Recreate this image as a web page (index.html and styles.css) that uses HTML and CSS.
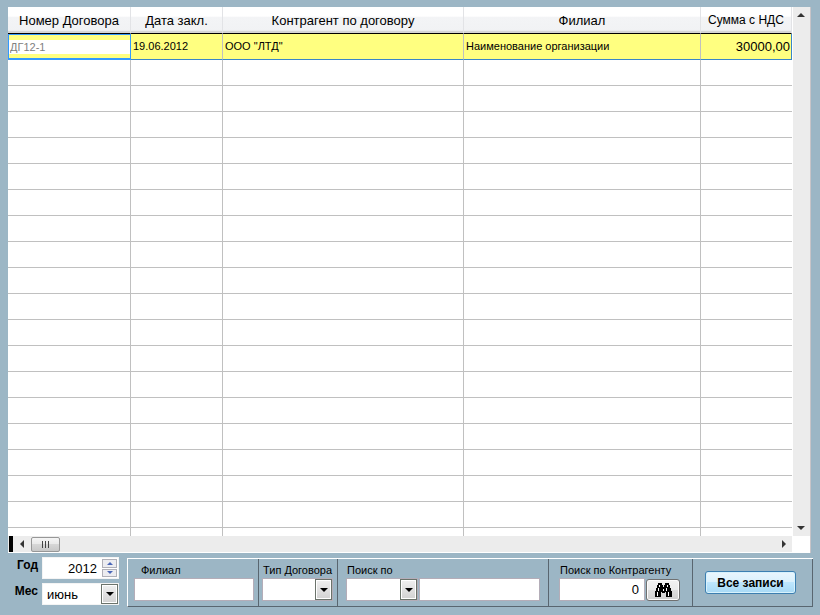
FILE: index.html
```html
<!DOCTYPE html>
<html lang="ru">

<head>
    <meta charset="UTF-8" />
    <title>Договора</title>
    <link rel="stylesheet" href="styles.css">
</head>

<body>
    <main class="grid">
        <div class="grid-view">
            <table>
                <colgroup>
                    <col class="col-number">
                    <col class="col-date">
                    <col class="col-partner">
                    <col class="col-branch">
                    <col class="col-sum">
                </colgroup>
                <thead>
                    <tr>
                        <th>Номер Договора</th>
                        <th>Дата закл.</th>
                        <th>Контрагент по договору</th>
                        <th>Филиал</th>
                        <th class="sum-head">Сумма с НДС</th>
                    </tr>
                </thead>
                <tbody>
                    <tr class="selected">
                        <td class="active"><input type="text" class="cell-input" value="ДГ12-1" aria-label="Номер Договора"></td>
                        <td>19.06.2012</td>
                        <td>ООО "ЛТД"</td>
                        <td>Наименование организации</td>
                        <td class="sum">30000,00</td>
                    </tr>
                    <tr><td></td><td></td><td></td><td></td><td></td></tr>
                    <tr><td></td><td></td><td></td><td></td><td></td></tr>
                    <tr><td></td><td></td><td></td><td></td><td></td></tr>
                    <tr><td></td><td></td><td></td><td></td><td></td></tr>
                    <tr><td></td><td></td><td></td><td></td><td></td></tr>
                    <tr><td></td><td></td><td></td><td></td><td></td></tr>
                    <tr><td></td><td></td><td></td><td></td><td></td></tr>
                    <tr><td></td><td></td><td></td><td></td><td></td></tr>
                    <tr><td></td><td></td><td></td><td></td><td></td></tr>
                    <tr><td></td><td></td><td></td><td></td><td></td></tr>
                    <tr><td></td><td></td><td></td><td></td><td></td></tr>
                    <tr><td></td><td></td><td></td><td></td><td></td></tr>
                    <tr><td></td><td></td><td></td><td></td><td></td></tr>
                    <tr><td></td><td></td><td></td><td></td><td></td></tr>
                    <tr><td></td><td></td><td></td><td></td><td></td></tr>
                    <tr><td></td><td></td><td></td><td></td><td></td></tr>
                    <tr><td></td><td></td><td></td><td></td><td></td></tr>
                    <tr><td></td><td></td><td></td><td></td><td></td></tr>
                    <tr><td></td><td></td><td></td><td></td><td></td></tr>
                </tbody>
            </table>
        </div>
        <div class="scroll-v">
            <button type="button" class="scroll-btn" aria-label="Вверх">
                <svg width="8" height="4" viewBox="0 0 8 4"><path d="M0 4L4 0L8 4Z" fill="#333" /></svg>
            </button>
            <button type="button" class="scroll-btn" aria-label="Вниз">
                <svg width="8" height="4" viewBox="0 0 8 4"><path d="M0 0L4 4L8 0Z" fill="#333" /></svg>
            </button>
        </div>
        <div class="scroll-h">
            <span class="split"></span>
            <button type="button" class="scroll-btn" aria-label="Влево">
                <svg width="4" height="8" viewBox="0 0 4 8"><path d="M4 0L0 4L4 8Z" fill="#333" /></svg>
            </button>
            <span class="thumb">
                <svg width="9" height="7" viewBox="0 0 9 7"><path d="M1 0H2V7H1ZM4 0H5V7H4ZM7 0H8V7H7Z" fill="#444" /></svg>
            </span>
            <button type="button" class="scroll-btn scroll-right" aria-label="Вправо">
                <svg width="4" height="8" viewBox="0 0 4 8"><path d="M0 0L4 4L0 8Z" fill="#333" /></svg>
            </button>
        </div>
        <div class="corner"></div>
    </main>

    <form class="footer">
        <div class="period">
            <label for="year">Год</label>
            <div class="field">
                <input type="text" id="year" class="year" value="2012">
                <div class="spin">
                    <button type="button" aria-label="Больше">
                        <svg width="6" height="3" viewBox="0 0 6 3"><path d="M0 3L3 0L6 3Z" fill="#4a66b8" /></svg>
                    </button>
                    <button type="button" aria-label="Меньше">
                        <svg width="6" height="3" viewBox="0 0 6 3"><path d="M0 0L3 3L6 0Z" fill="#4a66b8" /></svg>
                    </button>
                </div>
            </div>
            <label for="month">Мес</label>
            <div class="field">
                <select id="month" class="month">
                    <option>июнь</option>
                </select>
                <span class="arrow"></span>
            </div>
        </div>

        <div class="filters">
            <div class="group group-branch">
                <label for="branch">Филиал</label>
                <input type="text" id="branch">
            </div>
            <div class="group group-type">
                <label for="type">Тип Договора</label>
                <div class="field">
                    <select id="type"><option></option></select>
                    <span class="arrow"></span>
                </div>
            </div>
            <div class="group group-search">
                <label for="search-by">Поиск по</label>
                <div class="row">
                    <div class="field">
                        <select id="search-by"><option></option></select>
                        <span class="arrow"></span>
                    </div>
                    <input type="text" aria-label="Текст поиска">
                </div>
            </div>
            <div class="group group-partner">
                <label for="partner">Поиск по Контрагенту</label>
                <div class="row">
                    <input type="text" id="partner" class="number" value="0">
                    <button type="button" class="find" aria-label="Найти">
                        <svg width="17" height="14" viewBox="0 0 17 14">
                            <path d="M3 0H7V2H8V4H9V2H10V0H14V2H15V5H16V8H17V14H11V9H10V10H7V9H6V14H0V8H1V5H2V2H3Z" fill="#000" />
                            <path d="M4 2H5V4H4ZM12 2H13V4H12ZM3 5H4V8H3ZM11 5H12V8H11ZM2 9H3V13H2ZM13 9H14V13H13ZM8 6H9V8H8Z" fill="#fff" />
                        </svg>
                    </button>
                </div>
            </div>
            <div class="group group-all">
                <button type="button" class="show-all">Все записи</button>
            </div>
        </div>
    </form>
</body>

</html>
```
FILE: styles.css
```css
* {
    box-sizing: border-box;
}

body {
    margin: 0;
    height: 100vh;
    padding: 7px 8px 8px;
    display: flex;
    flex-direction: column;
    background: #9cb6c5;
    color: #000;
    font-family: "Liberation Sans", Arial, sans-serif;
    font-size: 11px;
}

input,
select,
button {
    margin: 0;
    font-family: inherit;
    font-size: 13px;
    color: #000;
}

svg {
    display: block;
}

/* Table with its scrollbars */
.grid {
    flex: 1;
    min-height: 0;
    margin-right: 1px;
    display: grid;
    grid-template-columns: 1fr 18px;
    grid-template-rows: 1fr 17px;
    background: #fff;
    border-right: 1px solid #c8c4c8;
}

.grid-view {
    min-height: 0;
    overflow: hidden;
}

table {
    width: 100%;
    table-layout: fixed;
    border-collapse: separate;
    border-spacing: 0;
}

.col-number {
    width: 123px;
}

.col-date {
    width: 92px;
}

.col-branch {
    width: 237px;
}

.col-sum {
    width: 91px;
}

th {
    height: 27px;
    padding: 0;
    border-right: 1px solid #e2e3e6;
    border-bottom: 1px solid #000;
    background: linear-gradient(#fff 0, #fff 35%, #f3f4f6 40%, #f1f2f4 90%, #d5d5d5 92%);
    font-size: 13px;
    font-weight: normal;
    white-space: nowrap;
}

.sum-head {
    font-size: 12px;
}

td {
    height: 26px;
    padding: 0 2px 2px;
    border-right: 1px solid #c0c0c0;
    border-bottom: 1px solid #c0c0c0;
    white-space: nowrap;
}

td:last-child {
    border-right: none;
}

.selected td {
    background: #ffff80;
    border-bottom-color: #3a86c8;
}

.selected .active {
    padding: 0;
    border: 1px solid #3399ff;
    border-width: 1px 1px 2px;
}

.cell-input {
    display: block;
    width: 100%;
    height: 14px;
    padding: 0 1px;
    border: none;
    background: #fff;
    font-size: 11px;
    color: #808080;
}

.selected .sum {
    padding: 0 1px 0 2px;
    border-right: 1px solid #3a86c8;
    font-size: 13px;
    text-align: right;
}

.scroll-v,
.scroll-h {
    display: flex;
    justify-content: space-between;
    background: #ececec;
}

.scroll-v {
    flex-direction: column;
    border-left: 1px solid #fff;
}

.scroll-h {
    align-items: center;
    justify-content: flex-start;
    border-bottom: 1px solid #fff;
    padding-left: 1px;
}

.scroll-btn {
    display: flex;
    width: 16px;
    height: 16px;
    padding: 0;
    border: none;
    background: none;
    align-items: center;
    justify-content: center;
}

.split {
    width: 4px;
    height: 16px;
    margin-right: 1px;
    background: #000;
}

.thumb {
    display: flex;
    width: 29px;
    height: 15px;
    margin-left: 1px;
    align-items: center;
    justify-content: center;
    border: 1px solid #979797;
    border-radius: 2px;
    background: linear-gradient(#f5f5f5 0, #e9e9e9 45%, #d6d6d6 50%, #c8c8c8 100%);
}

.scroll-right {
    margin-left: auto;
}

/* Bottom panel */
.footer {
    display: flex;
    min-height: 54px;
    padding-top: 4px;
    gap: 8px;
}

.period {
    display: grid;
    grid-template-columns: 30px 77px;
    grid-template-rows: 22px 22px;
    column-gap: 4px;
    row-gap: 4px;
    font-size: 12px;
    font-weight: bold;
}

.period label {
    padding-top: 1px;
    text-align: right;
}

.field {
    position: relative;
    display: flex;
}

input[type="text"],
select {
    min-width: 0;
    border-radius: 0;
    outline: none;
}

.field,
.group input {
    background: #fff;
    border: 1px solid #b4adb8;
}

.period .field {
    border-color: #f4f4f4;
}

select {
    appearance: none;
    width: 100%;
    padding: 0 18px 0 4px;
    border: none;
    background: #fff;
}

.year {
    flex: 1;
    padding: 0 4px 0 0;
    border: none;
    text-align: right;
}

.spin {
    display: flex;
    flex-direction: column;
    width: 15px;
    margin: 1px;
    gap: 1px;
}

.spin button {
    display: flex;
    flex: 1;
    padding: 0;
    align-items: center;
    justify-content: center;
    border: 1px solid #b0b0b8;
    background: #ececf0;
}

/* Drop-down button drawn over the select */
.arrow {
    position: absolute;
    top: 0;
    right: 0;
    bottom: 0;
    width: 17px;
    border: 1px solid #6b736b;
    box-shadow: inset 0 0 0 1px #fff;
    background: linear-gradient(#f0f0f0, #d2d2d2);
    pointer-events: none;
}

.arrow::after {
    content: "";
    position: absolute;
    top: 50%;
    left: 50%;
    border: 4px solid transparent;
    border-top-color: #000;
    border-bottom: none;
    transform: translate(-50%, -50%);
}

.filters {
    flex: 1;
    min-width: 0;
    display: flex;
    margin-top: 1px;
    margin-right: -1px;
    border-top: 1px solid #fff;
    border-bottom: 1px solid #596670;
    border-left: 1px solid #fff;
}

.group {
    display: flex;
    flex: none;
    flex-direction: column;
    padding-top: 4px;
    border-right: 1px solid #596670;
}

.group label {
    height: 15px;
    padding-left: 1px;
    line-height: 15px;
    white-space: nowrap;
}

.group .field,
.group input {
    height: 23px;
}

.row {
    display: flex;
    gap: 1px;
}

.group-branch {
    width: 131px;
    padding-left: 6px;
    padding-right: 4px;
}

.group-branch label {
    padding-left: 7px;
}

.group-type {
    width: 79px;
    padding-left: 3px;
    padding-right: 4px;
}

.group-search {
    flex: 1;
    min-width: 0;
    padding-left: 8px;
    padding-right: 8px;
}

.group-search .field {
    flex: none;
    width: 72px;
}

.group-search input {
    flex: 1;
}

.group-partner {
    width: 144px;
    padding-left: 10px;
}

.number {
    width: 86px;
    padding: 0 5px;
    text-align: right;
}

.find {
    display: flex;
    width: 34px;
    height: 22px;
    margin-top: 1px;
    padding: 0;
    align-items: center;
    justify-content: center;
    border: 1px solid #707070;
    border-radius: 3px;
    box-shadow: inset 0 0 0 1px #fcfcfc;
    background: linear-gradient(#f2f2f2 0, #ebebeb 50%, #dddddd 50%, #cfcfcf 100%);
}

.group-all {
    width: 120px;
    padding-top: 0;
    padding-right: 4px;
    align-items: center;
    justify-content: center;
}

.show-all {
    width: 91px;
    height: 23px;
    padding: 0;
    border: 1px solid #3c7fb1;
    border-radius: 3px;
    box-shadow: inset 0 0 0 1px #d8f2fc;
    background: linear-gradient(#eaf6fd 0, #d9f0fc 50%, #bee6fd 50%, #a7d9f5 100%);
    font-size: 12px;
    font-weight: bold;
    white-space: nowrap;
}
```
